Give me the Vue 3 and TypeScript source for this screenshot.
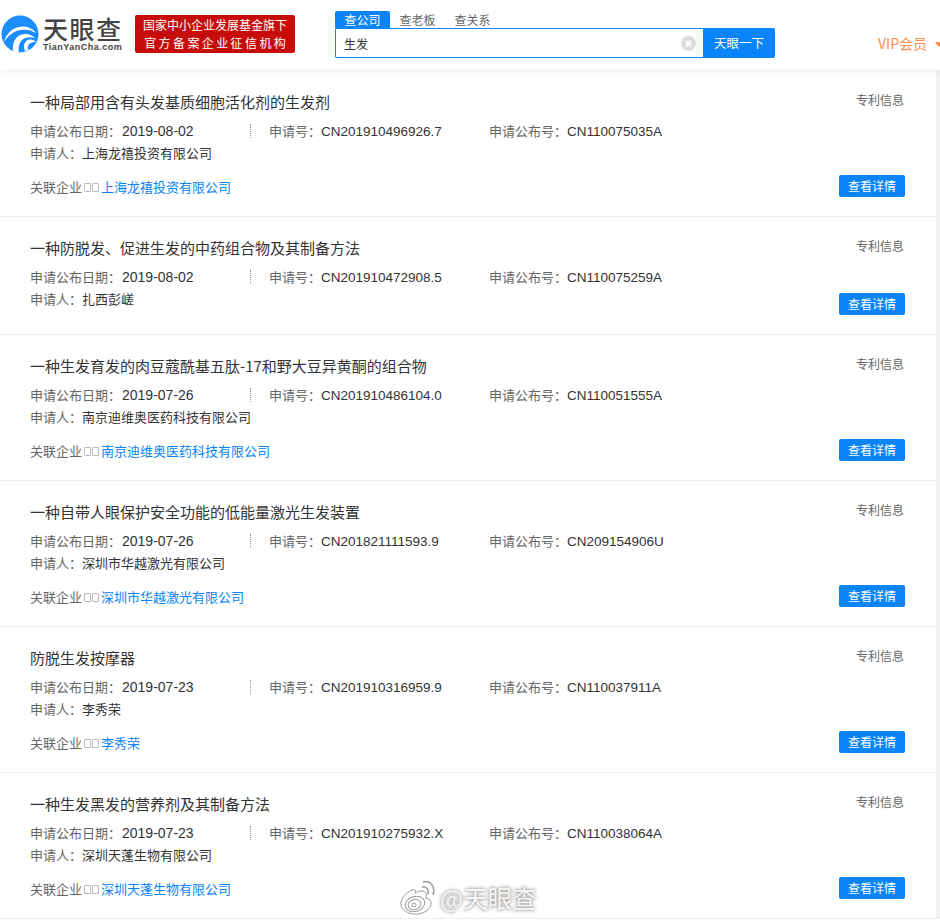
<script setup lang="ts">
interface Patent {
  title: string;
  date: string;
  appNo: string;
  pubNo: string;
  applicant: string;
  related?: string;
}

const tabs = ["查公司", "查老板", "查关系"];

const patents: Patent[] = [
  { title: "一种局部用含有头发基质细胞活化剂的生发剂", date: "2019-08-02", appNo: "CN201910496926.7", pubNo: "CN110075035A", applicant: "上海龙禧投资有限公司", related: "上海龙禧投资有限公司" },
  { title: "一种防脱发、促进生发的中药组合物及其制备方法", date: "2019-08-02", appNo: "CN201910472908.5", pubNo: "CN110075259A", applicant: "扎西彭嵯" },
  { title: "一种生发育发的肉豆蔻酰基五肽-17和野大豆异黄酮的组合物", date: "2019-07-26", appNo: "CN201910486104.0", pubNo: "CN110051555A", applicant: "南京迪维奥医药科技有限公司", related: "南京迪维奥医药科技有限公司" },
  { title: "一种自带人眼保护安全功能的低能量激光生发装置", date: "2019-07-26", appNo: "CN201821111593.9", pubNo: "CN209154906U", applicant: "深圳市华越激光有限公司", related: "深圳市华越激光有限公司" },
  { title: "防脱生发按摩器", date: "2019-07-23", appNo: "CN201910316959.9", pubNo: "CN110037911A", applicant: "李秀荣", related: "李秀荣" },
  { title: "一种生发黑发的营养剂及其制备方法", date: "2019-07-23", appNo: "CN201910275932.X", pubNo: "CN110038064A", applicant: "深圳天蓬生物有限公司", related: "深圳天蓬生物有限公司" },
];
</script>

<template>
  <div class="page">
    <header class="topbar">
      <div class="logo">
        <svg class="logo-mark" width="38" height="38" viewBox="0 0 38 38">
          <circle cx="19" cy="19" r="18.5" fill="#1b8dff" />
          <path d="M3 27C6 16 16 10 26 12c4 1 7 3 9 6-5-3-10-4-15-3C12 16 7 21 3 27z" fill="#fff" />
          <path d="M12 36c-1-9 3-16 11-17 4-.5 8 1 11 4-5-1.500-10-1-13 2-3 3-4 8-3 12l-3 1z" fill="#fff" />
          <path d="M24 36c-2-5-1-9 3-11 3-1 6 0 8 2-4 0-7 1-8 4-.5 2 0 4 1 4z" fill="#fff" />
        </svg>
        <div class="logo-text">
          <div class="logo-name">天眼查</div>
          <div class="logo-domain">TianYanCha.com</div>
        </div>
      </div>
      <div class="fund-badge">
        <div>国家中小企业发展基金旗下</div>
        <div class="fund-second">官方备案企业征信机构</div>
      </div>
      <div class="search">
        <div class="tabs">
          <span v-for="(tab, i) in tabs" :key="tab" class="tab" :class="{ active: i === 0 }">{{ tab }}</span>
        </div>
        <div class="search-row">
          <div class="search-input">
            <span>生发</span>
            <span class="clear">
              <svg width="15" height="15" viewBox="0 0 15 15">
                <circle cx="7.500" cy="7.500" r="7.500" fill="#dcdcdc" />
                <path d="M5 5l5 5M10 5l-5 5" stroke="#fff" stroke-width="1.800" />
              </svg>
            </span>
          </div>
          <div class="search-btn">天眼一下</div>
        </div>
      </div>
      <div class="vip">VIP会员<i class="caret"></i></div>
    </header>

    <main class="list">
      <section v-for="p in patents" :key="p.appNo" class="card">
        <div class="card-head">
          <h3 class="title">{{ p.title }}</h3>
          <span class="kind">专利信息</span>
        </div>
        <div class="meta">
          <div class="cell first">申请公布日期：<span class="num">{{ p.date }}</span></div>
          <div class="cell sep">申请号：<span class="num code">{{ p.appNo }}</span></div>
          <div class="cell">申请公布号：<span class="num code">{{ p.pubNo }}</span></div>
        </div>
        <div class="applicant">申请人：<span class="value">{{ p.applicant }}</span></div>
        <div class="foot" :class="{ 'no-related': !p.related }">
          <div v-if="p.related" class="related">
            关联企业<span class="boxes"><i></i><i></i></span><a class="link">{{ p.related }}</a>
          </div>
          <span class="detail-btn">查看详情</span>
        </div>
      </section>
    </main>

    <div class="watermark">
      <svg width="38" height="36" viewBox="0 0 38 36" fill="none" stroke="#999" stroke-width="1">
        <path d="M12 10C5 13 0 20 1 25c2 7 10 10 17 9 8-1 14-6 13-12-1-3-4-3.500-5-4 1-4 0-7-4-7-3 0-5 1-7 2 1-3 0-4-3-3z" fill="#fff" />
        <ellipse cx="15" cy="24" rx="10" ry="7.500" transform="rotate(-15 15 24)" />
        <ellipse cx="14.500" cy="24.500" rx="6.500" ry="5" transform="rotate(-15 14.500 24.500)" />
        <circle cx="14" cy="25" r="2" />
        <path d="M22 7c4-1 7 2 6 7M23 2c7-2 13 4 10 13" stroke-width="1.500" />
      </svg>
      <span>@天眼查</span>
    </div>
  </div>
</template>

<style scoped>
.page {
  position: relative;
  width: 940px;
  height: 920px;
  overflow: hidden;
  background: #fff;
  font-family: "Noto Sans CJK SC", "Liberation Sans", sans-serif;
  color: #666;
}

.topbar {
  display: flex;
  height: 70px;
  box-sizing: border-box;
  padding-top: 11px;
  background: #fff;
  box-shadow: 0 2px 4px rgba(0, 0, 0, 0.06);
  position: relative;
}

.logo {
  display: flex;
  flex: none;
  width: 135px;
  padding: 4px 0 0 1px;
  box-sizing: border-box;
}

.logo-mark {
  flex: none;
}

.logo-text {
  margin-left: 4px;
  color: #444;
}

.logo-name {
  font-size: 25px;
  line-height: 26px;
  letter-spacing: 1.5px;
  font-weight: 500;
}

.logo-domain {
  margin-top: 1px;
  font-family: "Liberation Sans", sans-serif;
  font-size: 9px;
  line-height: 11px;
  font-weight: 700;
  letter-spacing: 0.5px;
  white-space: nowrap;
}

.fund-badge {
  flex: none;
  width: 160px;
  height: 38px;
  margin-top: 4px;
  box-sizing: border-box;
  padding-top: 1px;
  border-radius: 2px;
  background: #c70c0c;
  color: #fff;
  font-size: 12px;
  line-height: 17.5px;
  text-align: center;
}

.fund-second {
  letter-spacing: 2.4px;
  text-indent: 2.4px;
}

.search {
  flex: none;
  width: 440px;
  margin-left: 40px;
}

.tabs {
  display: flex;
  height: 17px;
}

.tab {
  width: 55px;
  font-size: 12px;
  line-height: 18px;
  text-align: center;
  color: #666;
}

.tab.active {
  background: #0984f9;
  color: #fff;
  border-radius: 2px 2px 0 0;
}

.search-row {
  display: flex;
  height: 30px;
}

.search-input {
  display: flex;
  flex: 1;
  align-items: center;
  justify-content: space-between;
  padding: 0 7px 0 8px;
  border: 1px solid #0984f9;
  border-right: 0;
  border-radius: 2px 0 0 2px;
  font-size: 12px;
  color: #333;
}

.clear {
  display: flex;
}

.search-btn {
  width: 72px;
  background: #0984f9;
  border-radius: 0 2px 2px 0;
  color: #fff;
  font-size: 12.5px;
  line-height: 30px;
  text-align: center;
}

.vip {
  flex: none;
  margin-left: 103px;
  padding-top: 23px;
  font-size: 14px;
  line-height: 18px;
  color: #ff8a4a;
  white-space: nowrap;
}

.caret {
  display: inline-block;
  margin-left: 8px;
  border: 4px solid transparent;
  border-top: 5px solid #ff8a4a;
  border-bottom: 0;
  vertical-align: 2px;
}

.list {
  width: 936px;
  padding-top: 1px;
  border-right: 4px solid #f1f1f1;
}

.card {
  padding: 19px 31px 0 30px;
  border-bottom: 1px solid #e8eef4;
}

.card-head {
  display: flex;
  justify-content: space-between;
  height: 24px;
}

.title {
  margin: 0;
  font-size: 15px;
  line-height: 24px;
  font-weight: 400;
  color: #333;
}

.kind {
  margin-right: 1px;
  font-size: 12px;
  line-height: 20px;
  color: #666;
}

.meta {
  display: flex;
  margin-top: 6px;
  font-size: 13px;
  line-height: 22px;
}

.cell {
  white-space: nowrap;
}

.cell.first {
  width: 220px;
}

.cell.first .num {
  margin-left: 1px;
}

.cell.sep {
  position: relative;
  width: 239px;
  padding-left: 19px;
  box-sizing: border-box;
}

.cell.sep::before {
  content: "";
  position: absolute;
  left: 0;
  top: 4px;
  height: 14px;
  border-left: 1px dotted #999;
}

.num {
  font-family: "Liberation Sans", sans-serif;
  font-size: 14px;
  line-height: 1;
  color: #333;
}

.num.code {
  font-size: 13.5px;
}

.applicant {
  height: 22px;
  font-size: 13px;
  line-height: 22px;
}

.value {
  color: #333;
}

.foot {
  display: flex;
  align-items: center;
  justify-content: space-between;
  height: 22px;
  margin-top: 11px;
  margin-bottom: 19px;
}

/* without related companies the button moves up beside the applicant row */
.foot.no-related {
  margin-top: -17px;
}

.related {
  font-size: 13px;
  line-height: 21px;
  white-space: nowrap;
}

.boxes {
  display: inline-flex;
  width: 19px;
  gap: 1px;
  padding-left: 2px;
  box-sizing: border-box;
}

.boxes i {
  width: 5px;
  height: 7px;
  border: 1px solid #bbb;
  border-radius: 1px;
}

.link {
  color: #0984f9;
}

.detail-btn {
  width: 66px;
  height: 22px;
  margin-left: auto;
  border-radius: 2px;
  background: #0984f9;
  color: #fff;
  font-size: 12px;
  line-height: 22px;
  text-align: center;
}

.watermark {
  position: absolute;
  left: 400px;
  top: 880px;
  display: flex;
  align-items: center;
  gap: 2px;
}

.watermark span {
  font-size: 24.5px;
  line-height: 32px;
  color: #f6f6f6;
  text-shadow: 0 0 3px #999, 0 0 4px #aaa;
}
</style>
